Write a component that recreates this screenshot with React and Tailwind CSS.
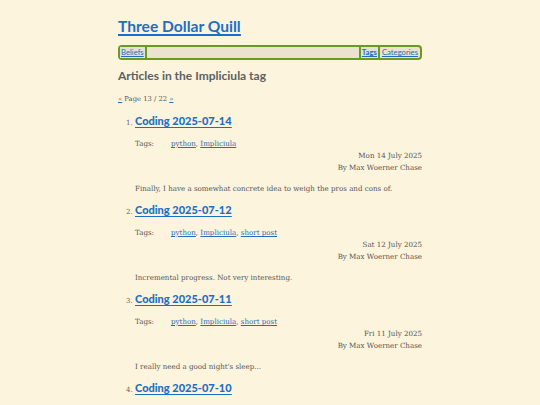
const posts = [
  { title: 'Coding 2025-07-14', tags: ['python', 'Impliciula'], date: 'Mon 14 July 2025', summary: 'Finally, I have a somewhat concrete idea to weigh the pros and cons of.' },
  { title: 'Coding 2025-07-12', tags: ['python', 'Impliciula', 'short post'], date: 'Sat 12 July 2025', summary: 'Incremental progress. Not very interesting.' },
  { title: 'Coding 2025-07-11', tags: ['python', 'Impliciula', 'short post'], date: 'Fri 11 July 2025', summary: "I really need a good night's sleep..." },
  { title: 'Coding 2025-07-10', tags: ['python', 'Impliciula'], date: 'Thu 10 July 2025', summary: 'More work on the tokenizer.' },
]

const sans = "font-['Lato','Noto_Sans',sans-serif]"
const serif = "font-['DejaVu_Serif','Liberation_Serif',serif]"

export default function App() {
  return (
    <div className="h-screen bg-[#fcf4dd] overflow-hidden">
      <div className="mx-auto w-[304px] pt-[15px]">
        <h1 className={`${sans} text-[15.6px] leading-[22px] font-bold text-[#1c6fc6] underline decoration-[1.5px] underline-offset-[2px]`}>
          <a href="#">Three Dollar Quill</a>
        </h1>

        <nav className={`${sans} mt-[8px] flex h-[15px] items-stretch rounded-[4px] border-2 border-[#6b9a22] bg-[#ebe3cf] text-[7.7px] leading-[11px]`}>
          <a href="#" className="border-r-2 border-[#6b9a22] bg-[#dfe2da] px-[1px] text-[#2a6db5] underline">Beliefs</a>
          <div className="flex-1" />
          <a href="#" className="border-l-2 border-[#6b9a22] bg-[#dfe2da] px-[1px] font-bold text-[#2a6db5] underline">Tags</a>
          <a href="#" className="border-l-2 border-[#6b9a22] px-[2px] text-[#2a6db5] underline">Categories</a>
        </nav>

        <h2 className={`${sans} mt-[8px] text-[12px] leading-[16px] font-bold text-[#5a6263]`}>Articles in the Impliciula tag</h2>

        <p className={`${serif} mt-[10px] text-[6.8px] leading-[10px] text-[#555]`}>
          <a href="#" className="text-[#2a6db5] underline">«</a> Page 13 / 22 <a href="#" className="text-[#2a6db5] underline">»</a>
        </p>

        <ol className="mt-[9px] list-decimal pl-[17px] marker:text-[7px] marker:text-[#666] marker:font-['DejaVu_Serif',serif]">
          {posts.map(p => (
            <li key={p.title} className="mb-[7px]">
              <h3 className={`${sans} text-[11px] leading-[16px] font-black text-[#1c6fc6] underline decoration-[1px] underline-offset-[1.5px]`}>
                <a href="#">{p.title}</a>
              </h3>
              <div className={`${serif} text-[7.1px] leading-[12px] text-[#555]`}>
                <div className="mt-[9px] flex">
                  <span className="w-[36px]">Tags:</span>
                  <span>
                    {p.tags.map((t, i) => (
                      <span key={t}>
                        <a href="#" className="text-[#2a6db5] underline">{t}</a>
                        {i < p.tags.length - 1 ? ', ' : ''}
                      </span>
                    ))}
                  </span>
                </div>
                <div className="text-right">{p.date}</div>
                <div className="text-right">By Max Woerner Chase</div>
                <p className="mt-[9px]">{p.summary}</p>
              </div>
            </li>
          ))}
        </ol>
      </div>
    </div>
  )
}
